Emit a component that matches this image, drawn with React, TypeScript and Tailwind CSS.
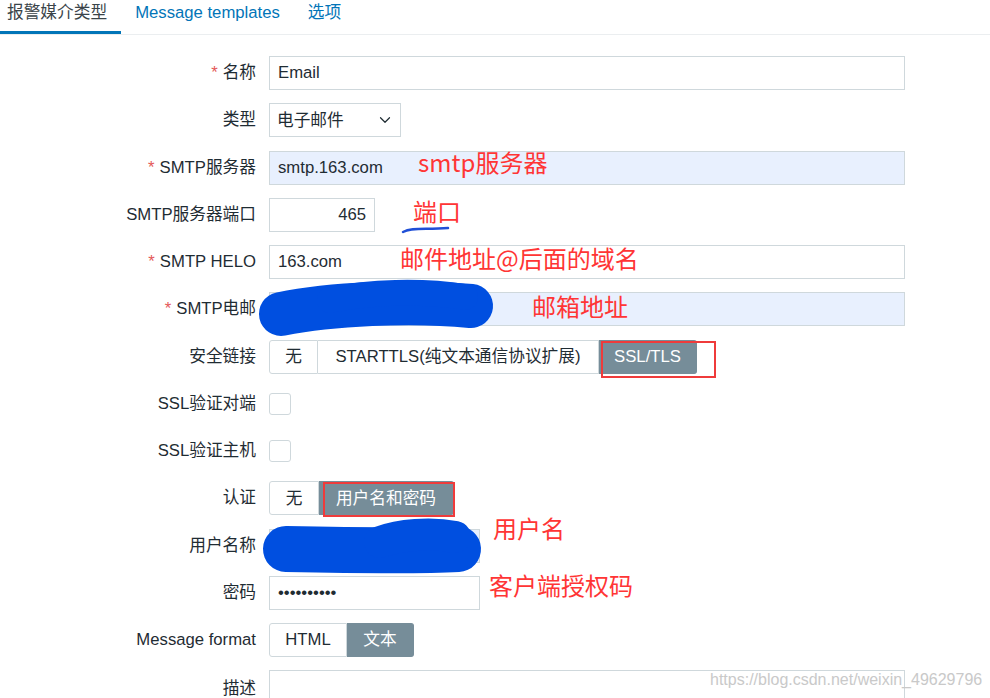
import { ChevronDown } from "lucide-react";
import type { ReactNode } from "react";

const FONT = "font-['Liberation_Sans','Noto_Sans_CJK_SC',sans-serif]";

function Label({ text, required }: { text: string; required?: boolean }) {
  return (
    <div className="flex h-[34px] items-center justify-end text-[16.7px] leading-[20px] text-[#1f2c33]">
      {required && <span className="mr-[5px] text-[#e45959]">*</span>}
      <span>{text}</span>
    </div>
  );
}

function Field({ children }: { children: ReactNode }) {
  return <div className="flex h-[34px] items-center">{children}</div>;
}

function TextBox({
  value,
  width,
  autofill,
  alignRight,
}: {
  value: string;
  width: string;
  autofill?: boolean;
  alignRight?: boolean;
}) {
  return (
    <div
      className={`flex h-[34px] items-center border border-[#cfd8dc] px-[8px] text-[16.7px] text-[#1f2c33] ${width} ${
        autofill ? "bg-[#e8f0fe]" : "bg-white"
      } ${alignRight ? "justify-end" : "justify-start"}`}
    >
      {value}
    </div>
  );
}

type Seg = { text: string; width: string; active?: boolean };

function Segmented({ items }: { items: Seg[] }) {
  return (
    <div className="flex h-[34px] text-[16.7px]">
      {items.map((s, i) => {
        const first = i === 0;
        const last = i === items.length - 1;
        return (
          <div
            key={s.text}
            className={`flex h-full items-center justify-center whitespace-nowrap border ${s.width} ${
              first ? "rounded-l-[3px]" : "border-l-0"
            } ${last ? "rounded-r-[3px]" : ""} ${
              s.active
                ? "border-[#768d99] bg-[#768d99] text-white"
                : "border-[#cfd8dc] bg-white text-[#1f2c33]"
            }`}
          >
            {s.text}
          </div>
        );
      })}
    </div>
  );
}

function CheckBox() {
  return <div className="h-[22px] w-[22px] rounded-[3px] border border-[#cfd8dc] bg-white" />;
}

function Note({ text, className }: { text: string; className: string }) {
  return (
    <div
      className={`pointer-events-none absolute whitespace-nowrap font-['Noto_Sans_CJK_SC',sans-serif] text-[24px] leading-[24px] text-[#ff3535] ${className}`}
    >
      {text}
    </div>
  );
}

export default function App() {
  return (
    <div className={`relative h-[698px] w-[990px] overflow-hidden bg-white ${FONT}`}>
      {/* tab strip */}
      <div className="flex h-[35px] border-b border-[#ebeef0] text-[16.7px] leading-[20px]">
        <div className="h-[34px] whitespace-nowrap border-b-[3px] border-[#0275b8] pl-[7px] pr-[14px] pt-[3px] text-[#3a4449]">
          报警媒介类型
        </div>
        <div className="h-[34px] whitespace-nowrap px-[14px] pt-[3px] text-[#0275b8]">Message templates</div>
        <div className="h-[34px] whitespace-nowrap px-[14px] pt-[3px] text-[#0275b8]">选项</div>
      </div>

      {/* media type form */}
      <div className="grid grid-cols-[256px_1fr] gap-x-[13px] gap-y-[13.25px] pt-[21px]">
        <Label text="名称" required />
        <Field>
          <TextBox value="Email" width="w-[636px]" />
        </Field>

        <Label text="类型" />
        <Field>
          <div className="flex h-[34px] w-[132px] items-center justify-between border border-[#cfd8dc] bg-white pl-[7px] pr-[6px] text-[16.7px] text-[#1f2c33]">
            <span>电子邮件</span>
            <ChevronDown size={18} strokeWidth={1.6} color="#1f2c33" />
          </div>
        </Field>

        <Label text="SMTP服务器" required />
        <Field>
          <TextBox value="smtp.163.com" width="w-[636px]" autofill />
        </Field>

        <Label text="SMTP服务器端口" />
        <Field>
          <TextBox value="465" width="w-[106px]" alignRight />
        </Field>

        <Label text="SMTP HELO" required />
        <Field>
          <TextBox value="163.com" width="w-[636px]" />
        </Field>

        <Label text="SMTP电邮" required />
        <Field>
          <TextBox value="" width="w-[636px]" autofill />
        </Field>

        <Label text="安全链接" />
        <Field>
          <Segmented
            items={[
              { text: "无", width: "w-[49px]" },
              { text: "STARTTLS(纯文本通信协议扩展)", width: "w-[281px]" },
              { text: "SSL/TLS", width: "w-[98px]", active: true },
            ]}
          />
        </Field>

        <Label text="SSL验证对端" />
        <Field>
          <CheckBox />
        </Field>

        <Label text="SSL验证主机" />
        <Field>
          <CheckBox />
        </Field>

        <Label text="认证" />
        <Field>
          <Segmented
            items={[
              { text: "无", width: "w-[50px]" },
              { text: "用户名和密码", width: "w-[135px]", active: true },
            ]}
          />
        </Field>

        <Label text="用户名称" />
        <Field>
          <TextBox value="" width="w-[211px]" autofill />
        </Field>

        <Label text="密码" />
        <Field>
          <TextBox value="••••••••••" width="w-[211px]" />
        </Field>

        <Label text="Message format" />
        <Field>
          <Segmented
            items={[
              { text: "HTML", width: "w-[78px]" },
              { text: "文本", width: "w-[67px]", active: true },
            ]}
          />
        </Field>

        <div className="flex h-[34px] items-center justify-end pt-[3px] text-[16.7px] text-[#1f2c33]">描述</div>
        <div className="h-[90px] w-[636px] border border-[#cfd8dc] bg-white" />
      </div>

      {/* hand-drawn marks laid over the form */}
      <svg
        className="pointer-events-none absolute left-0 top-0"
        width="990"
        height="698"
        viewBox="0 0 990 698"
      >
        <g fill="none" stroke="#004fe0" strokeLinecap="round" strokeLinejoin="round">
          <path d="M281 314 C 330 304, 410 300, 471 306" strokeWidth="44" />
          <path d="M330 300 C 370 292, 420 290, 465 297" strokeWidth="26" />
          <path d="M286 549 C 340 550, 420 551, 458 549" strokeWidth="46" />
          <path d="M380 542 C 400 535, 430 532, 455 537" strokeWidth="32" />
          <path d="M403 232 C 412 227, 426 230, 448 228" strokeWidth="2.5" stroke="#1f4fd6" />
        </g>
      </svg>

      <div className="pointer-events-none absolute left-[601px] top-[341px] h-[37px] w-[115px] border-2 border-[#ef3b3b]" />
      <div className="pointer-events-none absolute left-[323px] top-[482px] h-[35px] w-[132px] border-2 border-[#ef3b3b]" />

      <Note text="smtp服务器" className="left-[418px] top-[150px]" />
      <Note text="端口" className="left-[413px] top-[199px]" />
      <Note text="邮件地址@后面的域名" className="left-[400px] top-[246px]" />
      <Note text="邮箱地址" className="left-[532px] top-[294px]" />
      <Note text="用户名" className="left-[493px] top-[516px]" />
      <Note text="客户端授权码" className="left-[489px] top-[573px]" />

      <div className="pointer-events-none absolute left-[710px] top-[670px] whitespace-nowrap text-[16px] leading-[20px] text-[#c9c9c9]">
        https://blog.csdn.net/weixin_49629796
      </div>
    </div>
  );
}
